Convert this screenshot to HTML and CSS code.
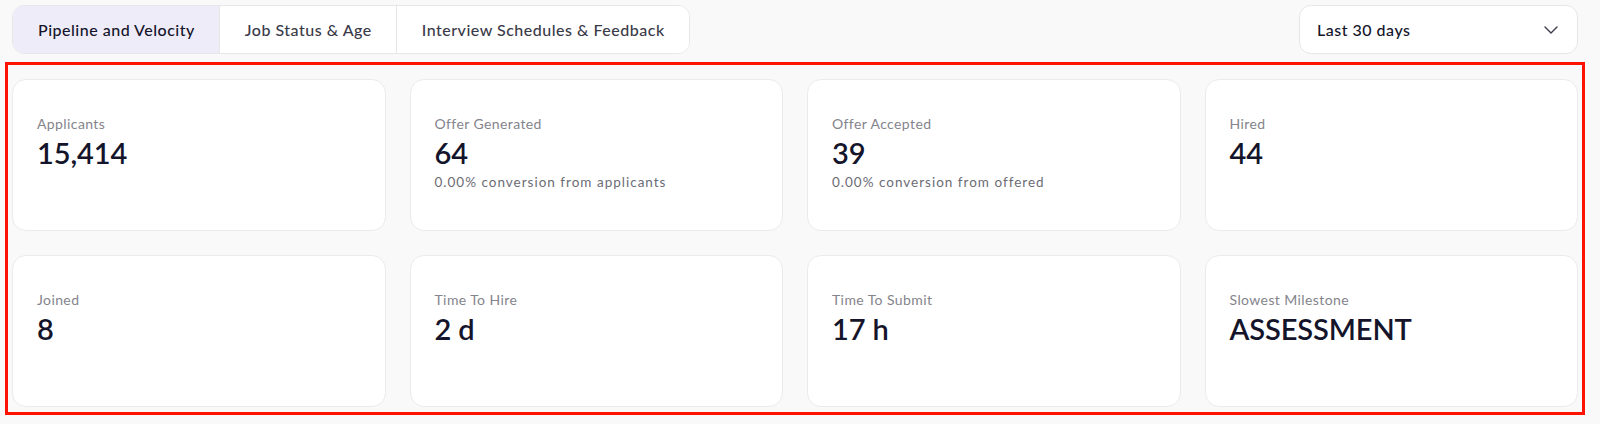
FILE: index.html
```html
<!DOCTYPE html>
<html lang="en">
<head>
    <meta charset="UTF-8">
    <meta name="viewport" content="width=device-width, initial-scale=1.0">
    <title>Pipeline and Velocity</title>
    <link rel="stylesheet" href="styles.css">
</head>
<body>
    <div class="page">
        <div class="toolbar">
            <div class="tabs">
                <button class="tab active">Pipeline and Velocity</button>
                <button class="tab">Job Status &amp; Age</button>
                <button class="tab">Interview Schedules &amp; Feedback</button>
            </div>
            <div class="range">
                <span>Last 30 days</span>
                <svg width="14" height="8" viewBox="0 0 14 8" fill="none">
                    <path d="M1 1l6 6 6-6" stroke="#3a3a4a" stroke-width="1.4" stroke-linecap="round" stroke-linejoin="round"/>
                </svg>
            </div>
        </div>

        <div class="highlight">
            <div class="stats">
                <div class="card">
                    <div class="label">Applicants</div>
                    <div class="value">15,414</div>
                </div>
                <div class="card">
                    <div class="label">Offer Generated</div>
                    <div class="value">64</div>
                    <div class="sub">0.00% conversion from applicants</div>
                </div>
                <div class="card">
                    <div class="label">Offer Accepted</div>
                    <div class="value">39</div>
                    <div class="sub">0.00% conversion from offered</div>
                </div>
                <div class="card">
                    <div class="label">Hired</div>
                    <div class="value">44</div>
                </div>
                <div class="card">
                    <div class="label">Joined</div>
                    <div class="value">8</div>
                </div>
                <div class="card">
                    <div class="label">Time To Hire</div>
                    <div class="value">2 d</div>
                </div>
                <div class="card">
                    <div class="label">Time To Submit</div>
                    <div class="value">17 h</div>
                </div>
                <div class="card">
                    <div class="label">Slowest Milestone</div>
                    <div class="value">ASSESSMENT</div>
                </div>
            </div>
        </div>
    </div>
</body>
</html>
```

FILE: styles.css
```css
body { margin: 0; background: #f9f9f9; font-family: Lato, "Noto Sans", sans-serif; color: #14142b; }

.page { padding: 5px 22px 0 12px; }

.toolbar { display: flex; justify-content: space-between; align-items: center; }
.tabs { display: flex; height: 49px; box-sizing: border-box; border: 1px solid #e7e7ea; border-radius: 12px; background: #fff; overflow: hidden; }
.tab { font-family: inherit; font-size: 16px; font-weight: 500; letter-spacing: 0.5px; color: #3a3a48; background: #fff; border: none; border-left: 1px solid #e7e7ea; padding: 0 24px 0 25px; cursor: pointer; }
.tab:first-child { border-left: none; }
.tab.active { background: #efecf9; color: #14142b; }

.range { display: flex; align-items: center; justify-content: space-between; width: 279px; height: 49px; box-sizing: border-box; padding: 0 19px 0 17px; background: #fff; border: 1px solid #e7e7ea; border-radius: 12px; font-size: 16px; font-weight: 500; letter-spacing: 0.5px; }

.highlight { margin: 8px -7px 0 -7px; border: 3px solid #ff1200; padding: 14px 4px 5px 4px; }
.stats { display: grid; grid-template-columns: repeat(4, 1fr); gap: 24px; }
.card { height: 152px; box-sizing: border-box; background: #fff; border: 1px solid #ebebee; border-radius: 14px; padding: 35px 24px 0 24px; }
.label { font-size: 14px; line-height: 18px; letter-spacing: 0.4px; color: #84848c; }
.value { font-size: 29px; line-height: 36px; font-weight: 600; margin-top: 2px; letter-spacing: -0.1px; }
.sub { font-size: 13.5px; line-height: 18px; color: #6c6c74; letter-spacing: 1px; margin-top: 2px; }
```
